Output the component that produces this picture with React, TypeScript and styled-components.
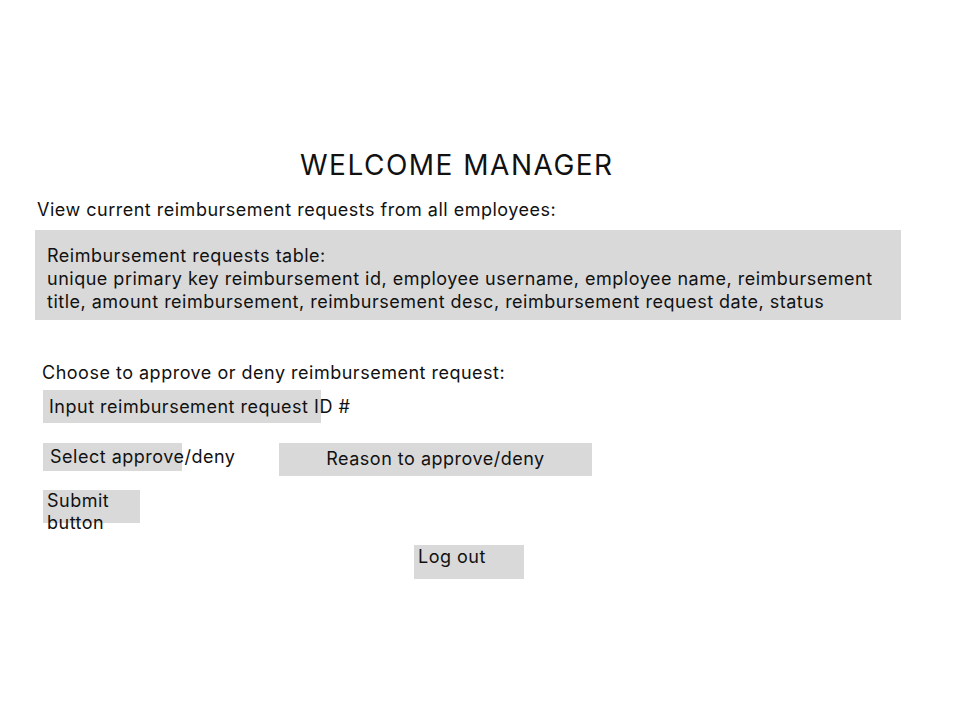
import React from "react";
import styled, { createGlobalStyle } from "styled-components";

const Global = createGlobalStyle`
  html, body { margin: 0; padding: 0; background: #ffffff; }
  body { font-family: Inter, "Noto Sans", sans-serif; color: #111111; }
`;

const Page = styled.div`
  width: 960px;
  height: 720px;
  box-sizing: border-box;
  padding-top: 147px;
  display: flex;
  flex-direction: column;
  align-items: flex-start;
`;

const Title = styled.h1`
  margin: 0 0 0 300px;
  font-size: 28px;
  font-weight: 400;
  line-height: 36px;
  letter-spacing: 1.5px;
  white-space: nowrap;
`;

const Text = styled.p<{ $left: number; $top: number }>`
  margin: ${(p) => p.$top}px 0 0 ${(p) => p.$left}px;
  font-size: 18px;
  line-height: 23px;
  letter-spacing: 0.5px;
  white-space: nowrap;
`;

const Panel = styled.div`
  margin: 9px 0 0 35px;
  width: 866px;
  height: 90px;
  box-sizing: border-box;
  padding: 14px 12px;
  background: #d9d9d9;
  font-size: 18px;
  line-height: 23px;
  letter-spacing: 0.5px;
  white-space: nowrap;
`;

const Box = styled.div<{
  $left: number;
  $top: number;
  $w: number;
  $h: number;
  $padX?: number;
  $padY?: number;
  $center?: boolean;
  $wrap?: boolean;
}>`
  margin: ${(p) => p.$top}px 0 0 ${(p) => p.$left}px;
  width: ${(p) => p.$w}px;
  height: ${(p) => p.$h}px;
  flex-shrink: 0;
  box-sizing: border-box;
  background: #d9d9d9;
  padding: ${(p) => p.$padY ?? 0}px ${(p) => p.$padX ?? 6}px 0;
  font-size: 18px;
  line-height: ${(p) => (p.$wrap ? 22 : 23)}px;
  letter-spacing: 0.5px;
  white-space: ${(p) => (p.$wrap ? "normal" : "nowrap")};
  text-align: ${(p) => (p.$center ? "center" : "left")};
  overflow: visible;
`;

const Row = styled.div`
  display: flex;
  align-items: flex-start;
`;

export default function App() {
  return (
    <>
      <Global />
      <Page>
        <Title>WELCOME MANAGER</Title>
        <Text $left={37} $top={15}>
          View current reimbursement requests from all employees:
        </Text>
        <Panel>
          Reimbursement requests table:
          <br />
          unique primary key reimbursement id, employee username, employee name, reimbursement
          <br />
          title, amount reimbursement, reimbursement desc, reimbursement request date, status
        </Panel>
        <Text $left={42} $top={41}>
          Choose to approve or deny reimbursement request:
        </Text>
        <Box $left={43} $top={6} $w={278} $h={33} $padY={5}>
          Input reimbursement request ID #
        </Box>
        <Row>
          <Box $left={43} $top={20} $w={139} $h={28} $padX={7} $padY={2}>
            Select approve/deny
          </Box>
          <Box $left={97} $top={20} $w={313} $h={33} $padY={4} $center>
            Reason to approve/deny
          </Box>
        </Row>
        <Box $left={43} $top={14} $w={97} $h={33} $padX={4} $wrap>
          Submit button
        </Box>
        <Box $left={414} $top={22} $w={110} $h={34} $padX={4}>
          Log out
        </Box>
      </Page>
    </>
  );
}
